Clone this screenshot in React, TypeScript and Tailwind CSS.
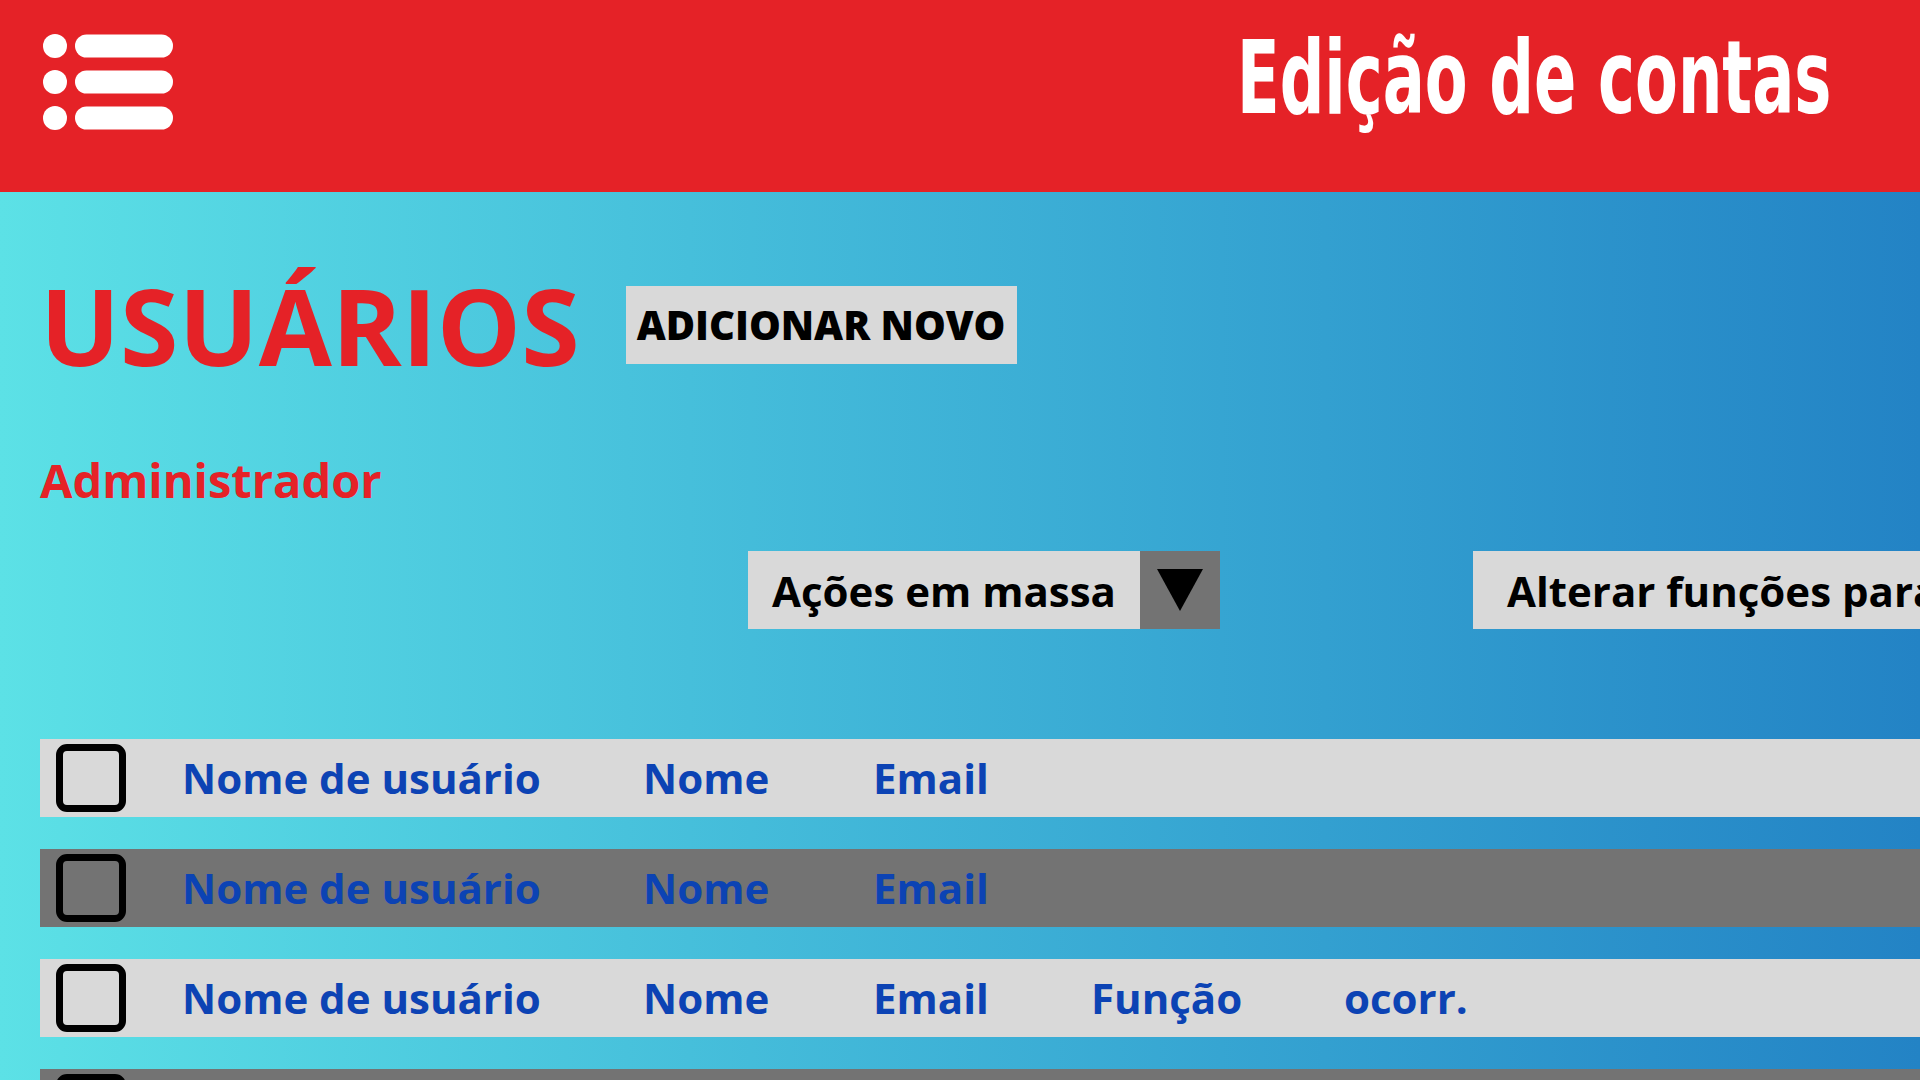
// Tela de edição de contas – lista de usuários
import React from "react";

const linhas = [
  { escuro: false, colunas: ["Nome de usuário", "Nome", "Email"] },
  { escuro: true, colunas: ["Nome de usuário", "Nome", "Email"] },
  { escuro: false, colunas: ["Nome de usuário", "Nome", "Email", "Função", "ocorr."] },
  { escuro: true, colunas: ["Nome de usuário", "Nome", "Email"] },
];

// larguras fixas de cada coluna da tabela
const larguras = ["w-[461px]", "w-[230px]", "w-[218px]", "w-[253px]", "w-[200px]"];

function IconeMenu() {
  return (
    <svg width="131" height="97" viewBox="0 0 131 97" className="ml-[43px] mt-[34px] shrink-0">
      {[12, 48, 84].map((y) => (
        <g key={y} fill="#fff">
          <circle cx="12" cy={y} r="12" />
          <rect x="32" y={y - 11.5} width="98" height="23" rx="11.5" />
        </g>
      ))}
    </svg>
  );
}

export default function App() {
  return (
    <div className="w-[1920px] h-[1080px] overflow-hidden flex flex-col font-['Open_Sans',sans-serif]">
      {/* Cabeçalho */}
      <header className="h-[192px] shrink-0 bg-[#e52227] flex items-start">
        <IconeMenu />
        <h1 className="ml-[1063px] mt-[27px] text-[102px] leading-none font-bold text-white whitespace-nowrap origin-left scale-x-[0.68] font-['DejaVu_Sans_Condensed',sans-serif]">
          Edição de contas
        </h1>
      </header>

      {/* Conteúdo */}
      <main className="flex-1 bg-linear-to-r from-[#5ce1e6] to-[#2383c5] pl-[40px] pt-[80px]">
        <div className="flex items-center gap-[46px]">
          <h2 className="text-[106px] leading-none font-bold text-[#e52227]">USUÁRIOS</h2>
          <button className="w-[391px] h-[78px] bg-[#d9d9d9] flex items-center justify-center text-[40px] font-extrabold text-black whitespace-nowrap">
            ADICIONAR NOVO
          </button>
        </div>

        <p className="mt-[79px] text-[47px] leading-none font-bold text-[#e52227]">Administrador</p>

        {/* Ações */}
        <div className="mt-[47px] ml-[708px] flex h-[78px]">
          <div className="flex w-[472px] shrink-0">
            <div className="flex-1 bg-[#d9d9d9] flex items-center pl-[24px] text-[42px] font-bold text-black whitespace-nowrap">
              Ações em massa
            </div>
            <div className="w-[80px] bg-[#737373] flex items-center justify-center">
              <svg width="46" height="42" viewBox="0 0 46 42">
                <polygon points="0,0 46,0 23,42" fill="#000" />
              </svg>
            </div>
          </div>
          <div className="ml-[253px] w-[600px] shrink-0 bg-[#d9d9d9] flex items-center pl-[34px] text-[42px] font-bold text-black whitespace-nowrap">
            Alterar funções para
          </div>
        </div>

        {/* Tabela de usuários */}
        <div className="mt-[110px] flex flex-col gap-[32px]">
          {linhas.map((linha, idx) => (
            <div
              key={idx}
              className={
                linha.escuro
                  ? "h-[78px] shrink-0 bg-[#737373] flex items-center pl-[16px]"
                  : "h-[78px] shrink-0 bg-[#d9d9d9] flex items-center pl-[16px]"
              }
            >
              <div className="w-[70px] h-[68px] shrink-0 border-[7px] border-black rounded-[11px]" />
              <div className="ml-[56px] flex items-center">
                {linha.colunas.map((col, i) => (
                  <span
                    key={i}
                    className={`${larguras[i]} shrink-0 text-[42px] leading-none font-bold text-[#0c43b4] whitespace-nowrap`}
                  >
                    {col}
                  </span>
                ))}
              </div>
            </div>
          ))}
        </div>
      </main>
    </div>
  );
}
